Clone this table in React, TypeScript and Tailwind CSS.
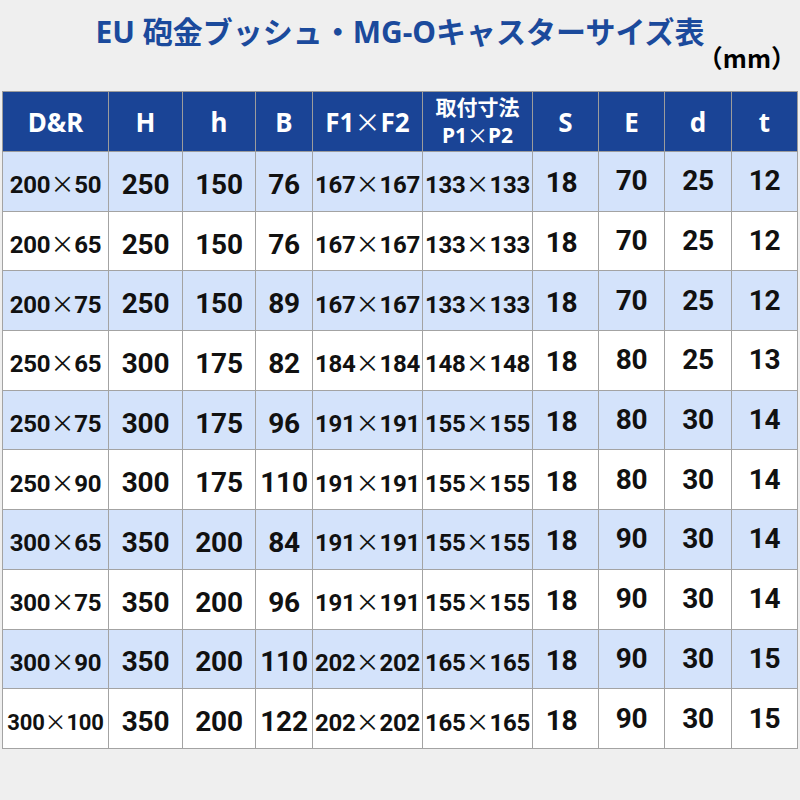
import React from "react";

// ─── Data ─────────────────────────────────────────────────────────────────────

const ROWS = [
  ["200×50", "250", "150", "76", "167×167", "133×133", "18", "70", "25", "12"],
  ["200×65", "250", "150", "76", "167×167", "133×133", "18", "70", "25", "12"],
  ["200×75", "250", "150", "89", "167×167", "133×133", "18", "70", "25", "12"],
  ["250×65", "300", "175", "82", "184×184", "148×148", "18", "80", "25", "13"],
  ["250×75", "300", "175", "96", "191×191", "155×155", "18", "80", "30", "14"],
  ["250×90", "300", "175", "110", "191×191", "155×155", "18", "80", "30", "14"],
  ["300×65", "350", "200", "84", "191×191", "155×155", "18", "90", "30", "14"],
  ["300×75", "350", "200", "96", "191×191", "155×155", "18", "90", "30", "14"],
  ["300×90", "350", "200", "110", "202×202", "165×165", "18", "90", "30", "15"],
  ["300×100", "350", "200", "122", "202×202", "165×165", "18", "90", "30", "15"],
];

const WIDTHS = [
  "w-[106px]",
  "w-[74px]",
  "w-[73px]",
  "w-[57px]",
  "w-[110px]",
  "w-[110px]",
  "w-[66px]",
  "w-[66px]",
  "w-[67px]",
  "w-[66px]",
];

// per-column text styling
const CELL_TEXT = [
  "text-[24px] pt-[6px]",
  "text-[28px] pt-[7px]",
  "text-[28px] pt-[7px]",
  "text-[28px] pt-[7px]",
  "text-[24px] pt-[6px]",
  "text-[24px] pt-[6px]",
  "text-[28px] pt-[4px] pr-[8px]",
  "text-[28px]",
  "text-[28px]",
  "text-[28px]",
];

// ─── Helpers ──────────────────────────────────────────────────────────────────

function Val({ text }: { text: string }) {
  const parts = text.split("×");
  if (parts.length === 1) return <>{text}</>;
  return (
    <>
      {parts[0]}
      <span className="font-['Noto_Sans_CJK_JP',sans-serif] font-normal">×</span>
      {parts[1]}
    </>
  );
}

// ─── App ──────────────────────────────────────────────────────────────────────

export default function App() {
  return (
    <div className="w-[800px] h-[800px] bg-[#efefef] font-['Roboto','Noto_Sans_CJK_JP',sans-serif] overflow-hidden">
      <div className="pt-[13px] text-center text-[30px] leading-[38px] font-bold text-[#1b4a9c] font-['Noto_Sans','Noto_Sans_CJK_JP',sans-serif]">
        EU 砲金ブッシュ・MG-Oキャスターサイズ表
      </div>
      <div className="-mt-[8px] flex justify-end pr-[4px] text-[25px] leading-[28px] font-bold text-black font-['Noto_Sans_CJK_JP',sans-serif]">
        （mm）
      </div>

      <table className="mt-[20px] ml-[2px] w-[795px] table-fixed border-collapse">
        <thead>
          <tr className="bg-[#1a4496] text-white h-[60px]">
            {["D&R", "H", "h", "B", "F1×F2"].map((h, i) => (
              <th
                key={h}
                className={`${WIDTHS[i]} border border-[#9c9c9c] p-0 text-[26px] font-bold leading-none font-['Noto_Sans',sans-serif]`}
              >
                <Val text={h} />
              </th>
            ))}
            <th className={`${WIDTHS[5]} border border-[#9c9c9c] p-0 text-[21px] font-bold leading-[27px] font-['Noto_Sans','Noto_Sans_CJK_JP',sans-serif]`}>
              <div>取付寸法</div>
              <div>
                P1<span className="font-['Noto_Sans_CJK_JP',sans-serif] font-normal">×</span>P2
              </div>
            </th>
            {["S", "E", "d", "t"].map((h, i) => (
              <th
                key={h}
                className={`${WIDTHS[i + 6]} border border-[#9c9c9c] p-0 text-[26px] font-bold leading-none font-['Noto_Sans',sans-serif]`}
              >
                {h}
              </th>
            ))}
          </tr>
        </thead>
        <tbody>
          {ROWS.map((row, r) => (
            <tr
              key={r}
              className={`h-[59.7px] ${r % 2 === 0 ? "bg-[#d4e3fb]" : "bg-white"}`}
            >
              {row.map((v, c) => (
                <td
                  key={c}
                  className={`border border-[#a3a3a3] p-0 text-center font-bold text-[#111] leading-none tracking-[-0.2px] whitespace-nowrap ${
                    v === "300×100" ? "text-[22px] pt-[6px]" : CELL_TEXT[c]
                  }`}
                >
                  <Val text={v} />
                </td>
              ))}
            </tr>
          ))}
        </tbody>
      </table>
    </div>
  );
}
